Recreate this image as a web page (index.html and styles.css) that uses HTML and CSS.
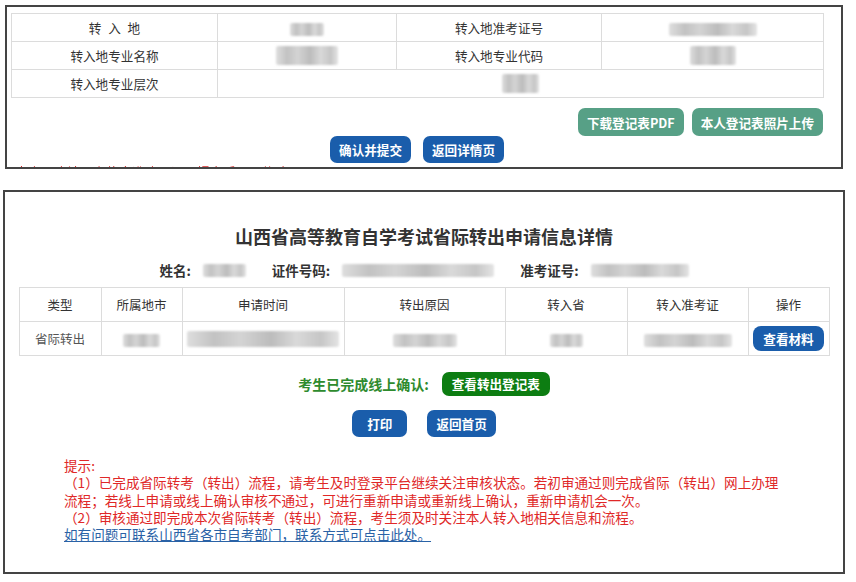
FILE: index.html
```html
<!DOCTYPE html>
<html lang="zh-CN">
<head>
<meta charset="utf-8">
<title>省际转出申请信息详情</title>
<link rel="stylesheet" href="styles.css">
</head>
<body>
<div class="panel panel-top">
  <table class="kv">
    <tr>
      <td class="c1"><span class="spaced">转 入 地</span></td>
      <td class="c2"><span class="blur w34"></span></td>
      <td class="c3">转入地准考证号</td>
      <td class="c4"><span class="blur w88"></span></td>
    </tr>
    <tr>
      <td>转入地专业名称</td>
      <td><span class="blur w62 tall"></span></td>
      <td>转入地专业代码</td>
      <td><span class="blur w46 tall"></span></td>
    </tr>
    <tr>
      <td>转入地专业层次</td>
      <td colspan="3"><span class="blur w37 tall"></span></td>
    </tr>
  </table>
  <div class="actions-right">
    <button class="btn btn-teal">下载登记表PDF</button>
    <button class="btn btn-teal">本人登记表照片上传</button>
  </div>
  <div class="actions-center">
    <button class="btn btn-blue">确认并提交</button>
    <button class="btn btn-blue">返回详情页</button>
  </div>
  <div class="cut-text">本人已确认以上信息准确无误，提交后不可修改。</div>
</div>

<div class="panel panel-bottom">
  <h1 class="title">山西省高等教育自学考试省际转出申请信息详情</h1>
  <div class="info">
    <span class="label">姓名:</span><span class="blur w43"></span>
    <span class="label">证件号码:</span><span class="blur w152"></span>
    <span class="label">准考证号:</span><span class="blur w98"></span>
  </div>
  <table class="list">
    <tr>
      <th class="k1">类型</th>
      <th class="k2">所属地市</th>
      <th class="k3">申请时间</th>
      <th class="k4">转出原因</th>
      <th class="k5">转入省</th>
      <th class="k6">转入准考证</th>
      <th class="k7">操作</th>
    </tr>
    <tr>
      <td>省际转出</td>
      <td><span class="blur w37"></span></td>
      <td><span class="blur w152 h16"></span></td>
      <td><span class="blur w64"></span></td>
      <td><span class="blur w33"></span></td>
      <td><span class="blur w88"></span></td>
      <td><button class="btn btn-blue btn-sm">查看材料</button></td>
    </tr>
  </table>
  <div class="confirm">
    <span class="confirm-label">考生已完成线上确认:</span>
    <button class="btn btn-green">查看转出登记表</button>
  </div>
  <div class="actions-bottom">
    <button class="btn btn-blue btn-wide">打印</button>
    <button class="btn btn-blue">返回首页</button>
  </div>
  <div class="tips">
    <p>提示:</p>
    <p>（1）已完成省际转考（转出）流程，请考生及时登录平台继续关注审核状态。若初审通过则完成省际（转出）网上办理流程；若线上申请或线上确认审核不通过，可进行重新申请或重新线上确认，重新申请机会一次。</p>
    <p>（2）审核通过即完成本次省际转考（转出）流程，考生须及时关注本人转入地相关信息和流程。</p>
    <p><a class="link" href="#">如有问题可联系山西省各市自考部门，联系方式可点击此处。</a></p>
  </div>
</div>
</body>
</html>
```

FILE: styles.css
```css
* { box-sizing: border-box; }
html, body { margin: 0; padding: 0; background: #ffffff; }
body {
  font-family: "Microsoft YaHei", "Noto Sans CJK SC", "Noto Sans", sans-serif;
  color: #333;
  width: 856px;
  height: 582px;
  overflow: hidden;
}

.panel {
  border: 2px solid #444;
  background: #fff;
  overflow: hidden;
}

/* ---------- top panel ---------- */
.panel-top {
  margin: 5px 0 0 5px;
  width: 838px;
  height: 164px;
  padding: 6px 18px 0 4px;
  display: flex;
  flex-direction: column;
}

.kv {
  width: 812px;
  border-collapse: collapse;
  table-layout: fixed;
  font-size: 12.6px;
  color: #333;
}
.kv td {
  border: 1px solid #dcdcdc;
  height: 28px;
  padding: 0;
  text-align: center;
  vertical-align: middle;
  line-height: 16px;
}
.kv .c1 { width: 206px; }
.kv .c2 { width: 179px; }
.kv .c3 { width: 205px; }
.kv .c4 { width: 222px; }
.spaced { word-spacing: 4px; }

.actions-right {
  display: flex;
  justify-content: flex-end;
  gap: 8px;
  margin-top: 10px;
  width: 812px;
}
.actions-center {
  display: flex;
  justify-content: center;
  gap: 12px;
  width: 812px;
}
.cut-text {
  margin-top: 1px;
  padding-left: 4px;
  font-size: 13px;
  line-height: 16px;
  color: #d62a2a;
  filter: blur(0.6px);
}

/* ---------- buttons ---------- */
.btn {
  font-family: inherit;
  font-weight: bold;
  font-size: 12.6px;
  color: #fff;
  border: none;
  border-radius: 7px;
  height: 27px;
  padding: 0 9px;
  line-height: 27px;
  cursor: pointer;
}
.btn-blue { background: #1a5dab; }
.btn-wide { padding: 0 15px; }
.btn-teal { background: #57a086; height: 28px; padding: 0 9px; }
.btn-green { background: #0d7d12; height: 24px; line-height: 24px; padding: 0 10px; border-radius: 7px; }
.btn-sm { height: 25px; line-height: 25px; padding: 0 10px; border-radius: 8px; }

/* ---------- blurred placeholders ---------- */
.blur {
  display: inline-block;
  vertical-align: middle;
  height: 13px;
  background: linear-gradient(90deg, #dedede 0%, #c2c2c2 18%, #d4d4d4 35%, #bcbcbc 55%, #d9d9d9 72%, #c6c6c6 88%, #e4e4e4 100%);
  filter: blur(1.2px);
  border-radius: 2px;
}
.blur.tall { height: 19px; }
.blur.h16 { height: 16px; }
.w33 { width: 33px; }
.w34 { width: 34px; }
.w37 { width: 37px; }
.w43 { width: 43px; }
.w46 { width: 46px; }
.w62 { width: 62px; }
.w64 { width: 64px; }
.w88 { width: 88px; }
.w98 { width: 98px; }
.w152 { width: 152px; }

/* ---------- bottom panel ---------- */
.panel-bottom {
  margin: 21px 0 0 3px;
  width: 842px;
  height: 384px;
  padding-top: 32px;
  display: flex;
  flex-direction: column;
  align-items: center;
}

.title {
  margin: 0;
  font-size: 18px;
  line-height: 24px;
  font-weight: bold;
  color: #333;
}

.info {
  margin-top: 12px;
  display: flex;
  align-items: center;
  height: 20px;
  font-size: 13.5px;
  font-weight: bold;
  color: #333;
}
.info .label { margin-left: 26px; margin-right: 12px; }
.info .label:first-child { margin-left: 0; }

.list {
  margin-top: 7px;
  width: 810px;
  border-collapse: collapse;
  table-layout: fixed;
  font-size: 12.5px;
}
.list th, .list td {
  border: 1px solid #dcdcdc;
  height: 34px;
  padding: 0;
  text-align: center;
  vertical-align: middle;
  line-height: 16px;
}
.list th { font-weight: normal; color: #333; }
.list td { color: #555; }
.list .k1 { width: 82px; }
.list .k2 { width: 81px; }
.list .k3 { width: 162px; }
.list .k4 { width: 161px; }
.list .k5 { width: 122px; }
.list .k6 { width: 121px; }
.list .k7 { width: 81px; }

.confirm {
  margin-top: 16px;
  display: flex;
  align-items: center;
  gap: 13px;
  height: 24px;
}
.confirm-label {
  font-size: 14px;
  font-weight: bold;
  color: #2e8b2e;
}

.actions-bottom {
  margin-top: 14px;
  display: flex;
  gap: 20px;
}

.tips {
  align-self: stretch;
  margin-top: 20px;
  padding-left: 59px;
  width: 775px;
  font-size: 13.6px;
  line-height: 17.3px;
  color: #e02828;
}
.tips p { margin: 0; }
.link { color: #2a62a6; text-decoration: underline; }
```
